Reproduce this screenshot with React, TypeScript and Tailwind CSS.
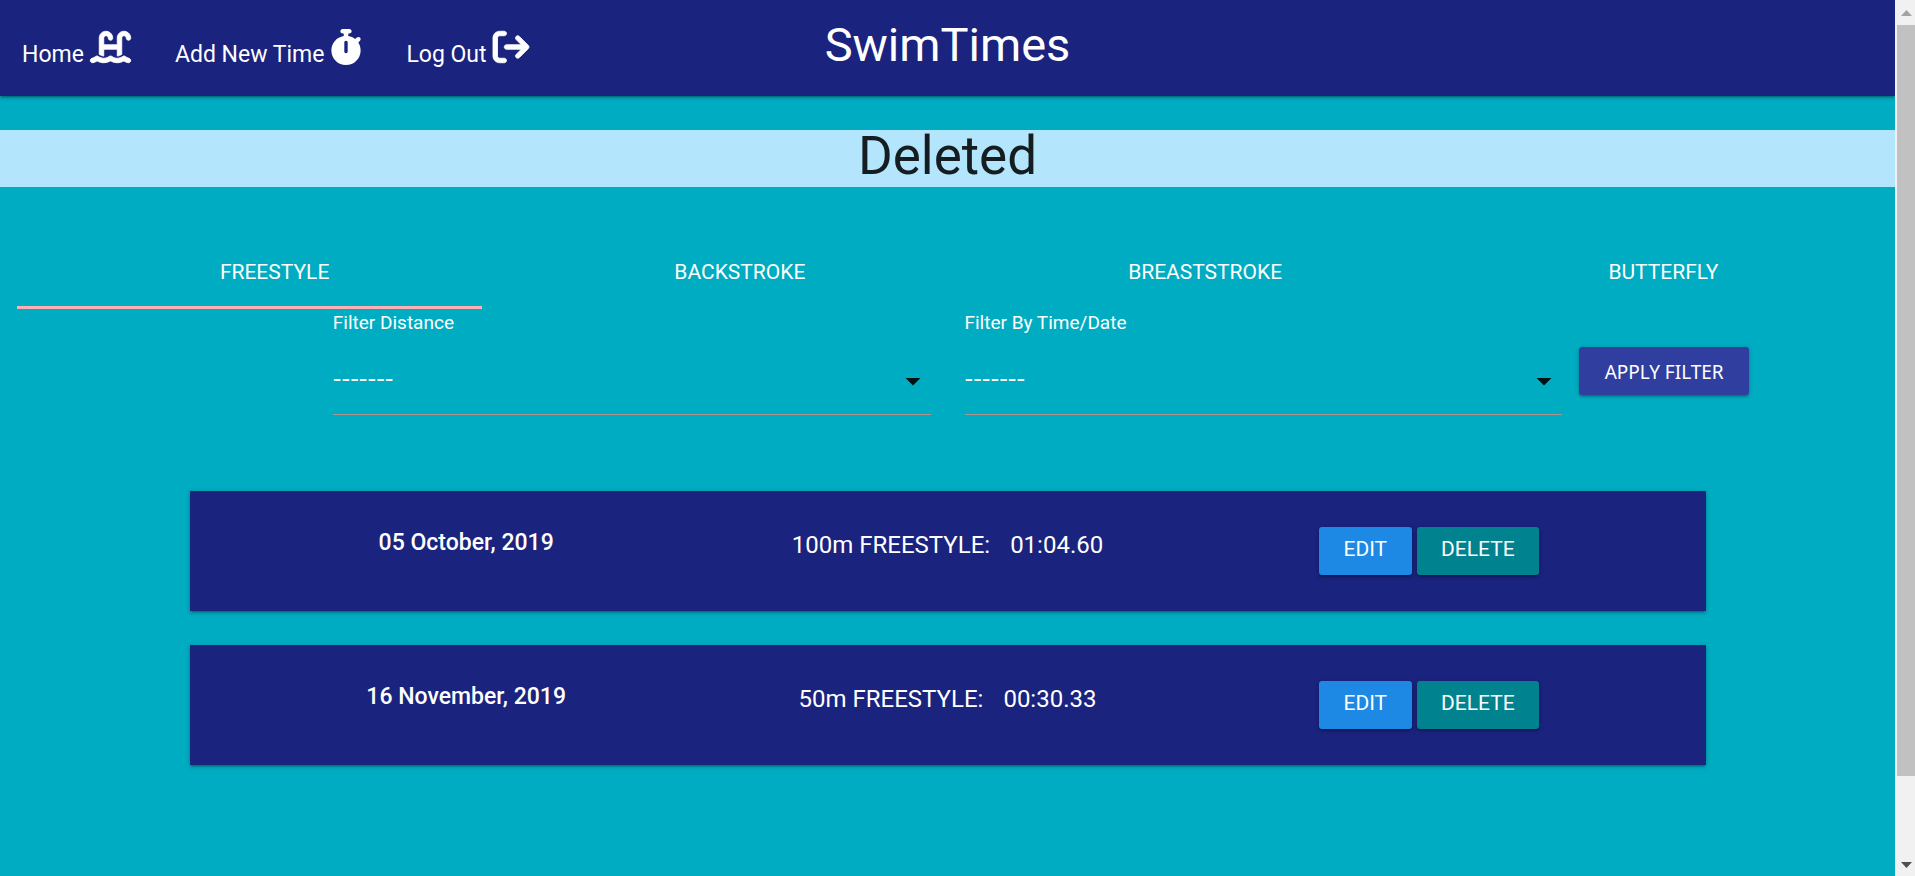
import { useState } from "react";
import type { ReactNode } from "react";
import { FaArrowRightFromBracket, FaStopwatch, FaWaterLadder } from "react-icons/fa6";

const TABS = ["Freestyle", "Backstroke", "Breaststroke", "Butterfly"];

const SWIMS = [
  { date: "05 October, 2019", event: "100m FREESTYLE:", time: "01:04.60" },
  { date: "16 November, 2019", event: "50m FREESTYLE:", time: "00:30.33" },
];

const RAISED =
  "shadow-[0_2px_2px_0_rgba(0,0,0,0.14),0_3px_1px_-2px_rgba(0,0,0,0.12),0_1px_5px_0_rgba(0,0,0,0.2)]";

function NavLink({ label, icon }: { label: string; icon: ReactNode }) {
  return (
    <li>
      <a href="#" className="flex items-start gap-1.5 whitespace-nowrap text-[23px] leading-9">
        <span className="pt-2">{label}</span>
        {icon}
      </a>
    </li>
  );
}

function Filter({ id, label }: { id: string; label: string }) {
  return (
    <div className="col-span-2 px-[17px]">
      <label htmlFor={id} className="block text-[19px] leading-7">
        {label}
      </label>
      <div className="relative mt-3">
        <select
          id={id}
          className="block h-[66px] w-full appearance-none border-b border-[#b0928f] bg-transparent pb-1.5 font-['DejaVu_Sans',sans-serif] text-2xl outline-none"
        >
          <option>-------</option>
        </select>
        <svg
          viewBox="0 0 24 24"
          className="pointer-events-none absolute right-0 top-3.5 size-9 fill-black/90"
          aria-hidden="true"
        >
          <path d="M7 10l5 5 5-5z" />
        </svg>
      </div>
    </div>
  );
}

function SwimCard({ date, event, time }: { date: string; event: string; time: string }) {
  return (
    <article className={`grid grid-cols-3 bg-[#1a237e] px-9 py-9 text-center ${RAISED}`}>
      <h2 className="text-[23px] font-medium leading-8">{date}</h2>
      <p className="flex justify-center gap-5 text-2xl leading-9">
        <span>{event}</span>
        <span>{time}</span>
      </p>
      <div className="flex justify-center gap-[5px]">
        <button
          type="button"
          className={`h-12 w-[93px] rounded-[3px] bg-[#1e88e5] pb-0.5 text-[21px] ${RAISED}`}
        >
          EDIT
        </button>
        <button
          type="button"
          className={`h-12 w-[122px] rounded-[3px] bg-[#00838f] pb-0.5 text-[21px] ${RAISED}`}
        >
          DELETE
        </button>
      </div>
    </article>
  );
}

function ScrollTrack() {
  return (
    <div className="flex w-5 shrink-0 flex-col bg-[#f1f1f1] pl-0.5" aria-hidden="true">
      <div className="flex h-[25px] items-center justify-center">
        <svg viewBox="0 0 11 6" className="h-1.5 w-[11px] fill-[#a3a3a3]">
          <path d="M0 6L5.500 0L11 6z" />
        </svg>
      </div>
      <div className="flex-[751] bg-[#c1c1c1]" />
      <div className="flex flex-[92] items-end justify-center pb-2">
        <svg viewBox="0 0 11 6" className="h-1.5 w-[11px] fill-[#505050]">
          <path d="M0 0L5.500 6L11 0z" />
        </svg>
      </div>
    </div>
  );
}

export default function App() {
  const [active, setActive] = useState(0);

  return (
    <div className="flex min-h-screen bg-[#00acc1] font-[Roboto,sans-serif] text-white">
      <div className="min-w-0 flex-1">
        <header className={`grid h-24 grid-cols-[1fr_auto_1fr] bg-[#1a237e] ${RAISED}`}>
          <nav className="pl-[22px] pt-[29px]">
            <ul className="flex gap-11">
              <NavLink
                label="Home"
                icon={<FaWaterLadder className="h-9 w-[41px] shrink-0 overflow-visible stroke-[12]" />}
              />
              <NavLink label="Add New Time" icon={<FaStopwatch className="h-9 w-8 shrink-0" />} />
              <NavLink
                label="Log Out"
                icon={<FaArrowRightFromBracket className="size-9 shrink-0 overflow-visible stroke-[12]" />}
              />
            </ul>
          </nav>
          <a href="#" className="text-[47px] leading-[90px]">
            SwimTimes
          </a>
        </header>

        <main>
          <h1 className="mt-[34px] bg-[#b3e5fc] pb-[5px] text-center text-[53px] leading-[52px] text-[#151d20]">
            Deleted
          </h1>

          <div role="tablist" className="mx-[17px] mt-12 grid grid-cols-4">
            {TABS.map((tab, i) => (
              <button
                key={tab}
                type="button"
                role="tab"
                aria-selected={i === active}
                onClick={() => setActive(i)}
                className="h-[74px] border-b-[3px] border-transparent pl-[50px] pt-1 text-[21px] uppercase last:pl-9 aria-selected:border-[#ffb0b5]"
              >
                {tab}
              </button>
            ))}
          </div>

          <form className="grid grid-cols-6" onSubmit={(e) => e.preventDefault()}>
            <div />
            <Filter id="distance" label="Filter Distance" />
            <Filter id="order" label="Filter By Time/Date" />
            <div className="pt-[38px]">
              <button
                type="submit"
                className={`h-12 w-[170px] rounded-[3px] bg-[#303f9f] pt-0.5 font-['Noto_Sans',sans-serif] text-[19px] ${RAISED}`}
              >
                APPLY FILTER
              </button>
            </div>
          </form>

          <section className="mx-auto mt-[76px] flex w-4/5 flex-col gap-[34px]">
            {SWIMS.map((swim) => (
              <SwimCard key={swim.date} {...swim} />
            ))}
          </section>
        </main>
      </div>
      <ScrollTrack />
    </div>
  );
}
